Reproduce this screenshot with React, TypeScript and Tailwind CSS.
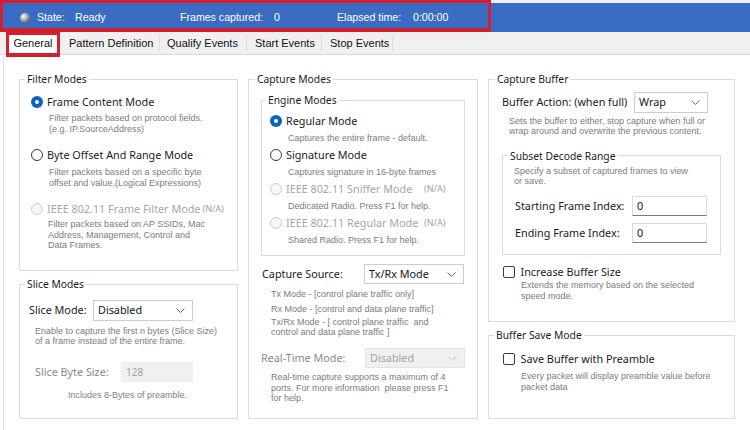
import type { ReactNode } from "react";

type RadioState = "on" | "off" | "disabled";

function Radio({ state }: { state: RadioState }) {
  if (state === "on") {
    return (
      <span className="flex size-[12px] shrink-0 items-center justify-center rounded-full bg-[#0a63c0]">
        <span className="size-[4px] rounded-full bg-white" />
      </span>
    );
  }
  if (state === "disabled") {
    return <span className="size-[12px] shrink-0 rounded-full border border-[#cfcfcf] bg-[#f6f6f6]" />;
  }
  return <span className="size-[12px] shrink-0 rounded-full border border-[#3c3c3c] bg-[#fbfbfb]" />;
}

function Checkbox() {
  return <span className="size-[12px] shrink-0 rounded-[2px] border border-[#3c3c3c] bg-white" />;
}

function Chevron({ color }: { color: string }) {
  return (
    <svg width="9" height="5" viewBox="0 0 9 5" fill="none">
      <path d="M0.5 0.5L4.5 4.5L8.5 0.5" stroke={color} strokeWidth="1" />
    </svg>
  );
}

function Select({ value, className, disabled }: { value: string; className: string; disabled?: boolean }) {
  return (
    <div
      className={`flex shrink-0 items-center justify-between border pl-[4px] pr-[7px] text-[10.8px] ${
        disabled ? "border-[#e3e3e3] bg-[#f0f0f0] text-[#a3a3a3]" : "border-[#cdcdcd] bg-white text-[#151515]"
      } ${className}`}
    >
      <span>{value}</span>
      <Chevron color={disabled ? "#c4c4c4" : "#6a6a6a"} />
    </div>
  );
}

function Group({
  title,
  className,
  legendClass,
  children,
}: {
  title: string;
  className: string;
  legendClass: string;
  children: ReactNode;
}) {
  return (
    <fieldset className={`border border-[#dcdcdc] ${className}`}>
      <legend className={`px-[2px] text-[10.3px] leading-[14px] text-[#1b1b1b] ${legendClass}`}>{title}</legend>
      {children}
    </fieldset>
  );
}

function Desc({ className = "", children }: { className?: string; children: ReactNode }) {
  return (
    <div className={`font-['Liberation_Sans',Arial,sans-serif] text-[9px] leading-[10.5px] text-[#7c7c7c] ${className}`}>
      {children}
    </div>
  );
}

function Option({
  state,
  label,
  na,
  children,
  descClass = "mt-[3px]",
  labelWidth,
}: {
  state: RadioState;
  label: string;
  na?: boolean;
  children: ReactNode;
  descClass?: string;
  labelWidth?: string;
}) {
  const off = state === "disabled";
  return (
    <div>
      <div className="flex h-[16px] items-center gap-[4px]">
        <Radio state={state} />
        <span className={`text-[10.8px] ${off ? "text-[#a6a6a6]" : "text-[#1b1b1b]"} ${labelWidth ?? ""}`}>
          {label}
        </span>
        {na && <span className="text-[9px] text-[#a0a0a0]">(N/A)</span>}
      </div>
      <Desc className={`pl-[18px] ${descClass}`}>{children}</Desc>
    </div>
  );
}

function StatusBar() {
  return (
    <div className="h-[32px] bg-[#eef0f4] pt-[3px] font-['Liberation_Sans',Arial,sans-serif] text-[10.6px] text-white">
      <div className="flex h-[29px] items-center bg-[#3b6cc4] pl-[20px] pt-[1px]">
        <svg width="10" height="10" viewBox="0 0 10 10" className="mr-[7px] shrink-0">
          <defs>
            <radialGradient id="ball" cx="35%" cy="35%" r="70%">
              <stop offset="0%" stopColor="#ffffff" />
              <stop offset="55%" stopColor="#a9a9a9" />
              <stop offset="100%" stopColor="#5e5e5e" />
            </radialGradient>
          </defs>
          <circle cx="5" cy="5" r="5" fill="url(#ball)" />
        </svg>
        <span className="w-[38px] shrink-0">State:</span>
        <span className="w-[105px] shrink-0">Ready</span>
        <span className="w-[94px] shrink-0">Frames captured:</span>
        <span className="w-[63px] shrink-0">0</span>
        <span className="w-[76px] shrink-0">Elapsed time:</span>
        <span>0:00:00</span>
      </div>
    </div>
  );
}

const tabs = [
  { label: "Pattern Definition", cls: "w-[100px] pl-[9px]" },
  { label: "Qualify Events", cls: "w-[87px] pl-[7px]" },
  { label: "Start Events", cls: "w-[75px] pl-[8px]" },
  { label: "Stop Events", cls: "w-[71px] pl-[8px]" },
];

function TabStrip() {
  return (
    <div className="flex h-[23px] border-b border-[#dadada] bg-[#f0f0f0] pl-[6px] font-['Liberation_Sans',Arial,sans-serif] text-[11px] text-[#111]">
      <div className="flex w-[54px] items-center justify-center bg-white">General</div>
      {tabs.map((tab) => (
        <div key={tab.label} className={`my-[3px] flex items-center border-r border-[#dcdcdc] ${tab.cls}`}>
          {tab.label}
        </div>
      ))}
    </div>
  );
}

function LeftColumn() {
  return (
    <div className="flex w-[219px] shrink-0 flex-col gap-[6px]">
      <Group title="Filter Modes" className="h-[199px]" legendClass="ml-[5px]">
        <div className="flex flex-col gap-[13px] pl-[11px] pt-[8px]">
          <Option state="on" label="Frame Content Mode">
            Filter packets based on protocol fields.
            <br />
            (e.g. IP.SourceAddress)
          </Option>
          <Option state="off" label="Byte Offset And Range Mode" descClass="mt-[4px]">
            Filter packets based on a specific byte
            <br />
            offset and value.(Logical Expressions)
          </Option>
          <div>
            <div className="flex h-[16px] items-center gap-[4px]">
              <Radio state="disabled" />
              <span className="text-[10.8px] text-[#a6a6a6]">IEEE 802.11 Frame Filter Mode</span>
              <span className="-ml-[2px] text-[9px] text-[#a0a0a0]">(N/A)</span>
            </div>
            <Desc className="mt-[2px] pl-[17px] text-[9.2px] text-[#6e6e6e]">
              Filter packets based on AP SSIDs, Mac
              <br />
              Address, Management, Control and
              <br />
              Data Frames.
            </Desc>
          </div>
        </div>
      </Group>
      <Group title="Slice Modes" className="h-[142px]" legendClass="ml-[5px]">
        <div className="pl-[9px] pt-[9px]">
          <div className="flex h-[21px] items-center">
            <span className="w-[64px] shrink-0 text-[10.8px] text-[#1b1b1b]">Slice Mode:</span>
            <Select value="Disabled" className="h-[21px] w-[100px]" />
          </div>
          <Desc className="ml-[6px] mt-[4.5px]">
            Enable to capture the first n bytes (Slice Size)
            <br />
            of a frame instead of the entire frame.
          </Desc>
          <div className="ml-[6px] mt-[15.5px] flex h-[20px] items-center">
            <span className="w-[86px] shrink-0 text-[10.8px] text-[#8a8a8a]">Slice Byte Size:</span>
            <div className="flex h-[20px] w-[72px] items-center bg-[#f0f0f0] pl-[5px] text-[10px] text-[#a3a3a3]">128</div>
          </div>
          <Desc className="ml-[39px] mt-[7.5px] text-[#808080]">Includes 8-Bytes of preamble.</Desc>
        </div>
      </Group>
    </div>
  );
}

function MiddleColumn() {
  return (
    <div className="w-[230px] shrink-0">
      <Group title="Capture Modes" className="h-[347px]" legendClass="ml-[6px]">
        <div className="pl-[12px] pt-[7px]">
          <Group title="Engine Modes" className="h-[163px] w-[204px]" legendClass="ml-[4px]">
            <div className="flex flex-col gap-[3.5px] pl-[8px] pt-[6px]">
              <Option state="on" label="Regular Mode" descClass="mt-[4px]">
                Captures the entire frame - default.
              </Option>
              <Option state="off" label="Signature Mode" descClass="mt-[4px]">
                Captures signature in 16-byte frames
              </Option>
              <Option state="disabled" label="IEEE 802.11 Sniffer Mode" na labelWidth="w-[134px]" descClass="mt-[4px]">
                Dedicated Radio. Press F1 for help.
              </Option>
              <Option state="disabled" label="IEEE 802.11 Regular Mode" na labelWidth="w-[134px]" descClass="mt-[4px]">
                Shared Radio. Press F1 for help.
              </Option>
            </div>
          </Group>
          <div className="mt-[8px] flex h-[20px] items-center">
            <span className="w-[103px] shrink-0 pl-[1px] text-[10.8px] text-[#1b1b1b]">Capture Source:</span>
            <Select value="Tx/Rx Mode" className="h-[20px] w-[100px]" />
          </div>
          <Desc className="ml-[10px] mt-[4.75px]">Tx Mode - [control plane traffic only]</Desc>
          <Desc className="ml-[10px] mt-[4.5px]">Rx Mode - [control and data plane traffic]</Desc>
          <Desc className="ml-[10px] mt-[2.5px] leading-[10.2px]">
            Tx/Rx Mode - [ control plane traffic&nbsp; and
            <br />
            control and data plane traffic ]
          </Desc>
          <div className="mt-[10.5px] flex h-[20px] items-center">
            <span className="w-[104px] shrink-0 text-[10.8px] text-[#8a8a8a]">Real-Time Mode:</span>
            <Select value="Disabled" className="h-[20px] w-[100px]" disabled />
          </div>
          <Desc className="ml-[10px] mt-[3.75px]">
            Real-time capture supports a maximum of 4
            <br />
            ports. For more information&nbsp; please press F1
            <br />
            for help.
          </Desc>
        </div>
      </Group>
    </div>
  );
}

function RightColumn() {
  return (
    <div className="flex w-[247px] shrink-0 flex-col gap-[6px]">
      <Group title="Capture Buffer" className="h-[250px]" legendClass="ml-[6px]">
        <div className="pl-[13px] pt-[6px]">
          <div className="flex h-[21px] items-center">
            <span className="w-[132px] shrink-0 text-[10.8px] text-[#1b1b1b]">Buffer Action: (when full)</span>
            <Select value="Wrap" className="h-[21px] w-[74px]" />
          </div>
          <Desc className="ml-[7px] mt-[2.75px]">
            Sets the buffer to either, stop capture when full or
            <br />
            wrap around and overwrite the previous content.
          </Desc>
          <Group title="Subset Decode Range" className="mt-[12px] h-[106px] w-[219px]" legendClass="ml-[5px]">
            <div className="pl-[11px] pt-[3px]">
              <Desc>
                Specify a subset of captured frames to view
                <br />
                or save.
              </Desc>
              {["Starting Frame Index:", "Ending Frame Index:"].map((label, i) => (
                <div key={label} className={`flex h-[20px] items-center ${i === 0 ? "mt-[9px]" : "mt-[7px]"}`}>
                  <span className="w-[118px] shrink-0 pl-[1px] text-[10.8px] text-[#1b1b1b]">{label}</span>
                  <div className="flex h-[20px] w-[75px] items-center border border-b-[#7a7a7a] border-[#dadada] bg-white pl-[4px] text-[10.8px] text-[#151515]">
                    0
                  </div>
                </div>
              ))}
            </div>
          </Group>
          <div className="ml-[1px] mt-[9.5px] flex h-[16px] items-center gap-[5.5px]">
            <Checkbox />
            <span className="text-[10.8px] text-[#1b1b1b]">Increase Buffer Size</span>
          </div>
          <Desc className="pl-[19px]">
            Extends the memory based on the selected
            <br />
            speed mode.
          </Desc>
        </div>
      </Group>
      <Group title="Buffer Save Mode" className="h-[91px]" legendClass="ml-[5px]">
        <div className="pl-[14px] pt-[9px]">
          <div className="flex h-[16px] items-center gap-[5.5px]">
            <Checkbox />
            <span className="text-[10.8px] text-[#1b1b1b]">Save Buffer with Preamble</span>
          </div>
          <Desc className="mt-[4px] pl-[18px]">
            Every packet will display preamble value before
            <br />
            packet data
          </Desc>
        </div>
      </Group>
    </div>
  );
}

export default function App() {
  return (
    <div className="relative h-[430px] w-[750px] overflow-hidden bg-white font-['Noto_Sans',sans-serif]">
      <StatusBar />
      <TabStrip />
      <div className="ml-[3px] flex h-[375px] gap-[10px] border-l border-[#dedede] pl-[15px] pt-[17px]">
        <LeftColumn />
        <MiddleColumn />
        <RightColumn />
      </div>
      {/* red annotation boxes drawn over the screenshot */}
      <div className="pointer-events-none absolute left-0 top-0 h-[32px] w-[491px] border-[3px] border-b-[4px] border-[#d3202e]" />
      <div className="pointer-events-none absolute left-[6px] top-[32px] h-[25px] w-[54px] border-[3px] border-b-[4px] border-[#d3202e]" />
    </div>
  );
}
